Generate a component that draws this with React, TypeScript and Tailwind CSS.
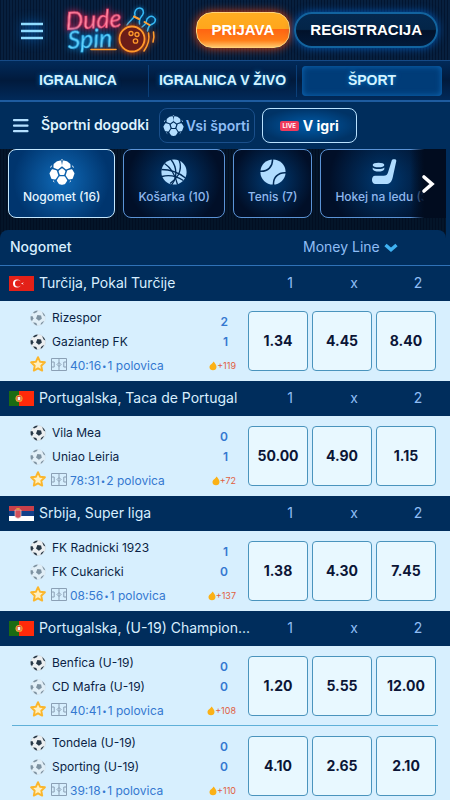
import { type ReactNode } from "react";

type Flag = "tr" | "pt" | "rs";

type Match = {
  home: string;
  away: string;
  score: [number, number];
  serving: "home" | "away";
  clock: string;
  half: string;
  more: number;
  odds: string[];
};

const leagues: { name: string; flag: Flag; matches: Match[] }[] = [
  {
    name: "Turčija, Pokal Turčije",
    flag: "tr",
    matches: [
      { home: "Rizespor", away: "Gaziantep FK", score: [2, 1], serving: "away", clock: "40:16", half: "1 polovica", more: 119, odds: ["1.34", "4.45", "8.40"] },
    ],
  },
  {
    name: "Portugalska, Taca de Portugal",
    flag: "pt",
    matches: [
      { home: "Vila Mea", away: "Uniao Leiria", score: [0, 1], serving: "home", clock: "78:31", half: "2 polovica", more: 72, odds: ["50.00", "4.90", "1.15"] },
    ],
  },
  {
    name: "Srbija, Super liga",
    flag: "rs",
    matches: [
      { home: "FK Radnicki 1923", away: "FK Cukaricki", score: [1, 0], serving: "home", clock: "08:56", half: "1 polovica", more: 137, odds: ["1.38", "4.30", "7.45"] },
    ],
  },
  {
    name: "Portugalska, (U-19) Champion...",
    flag: "pt",
    matches: [
      { home: "Benfica (U-19)", away: "CD Mafra (U-19)", score: [0, 0], serving: "home", clock: "40:41", half: "1 polovica", more: 108, odds: ["1.20", "5.55", "12.00"] },
      { home: "Tondela (U-19)", away: "Sporting (U-19)", score: [0, 0], serving: "home", clock: "39:18", half: "1 polovica", more: 110, odds: ["4.10", "2.65", "2.10"] },
    ],
  },
];

const sports = [
  { label: "Nogomet (16)", icon: <FootballIcon className="size-[26px]" />, active: true },
  { label: "Košarka (10)", icon: <BasketballIcon /> },
  { label: "Tenis (7)", icon: <TennisIcon /> },
  { label: "Hokej na ledu (3)", icon: <HockeyIcon /> },
];

function FootballIcon({ className }: { className: string }) {
  return (
    <svg viewBox="0 0 26 26" className={className} fill="currentColor" stroke="currentColor" strokeLinejoin="round" aria-hidden="true">
      <g strokeWidth="2">
        <path d="M13 10.4l2.400 1.800-.9 2.800h-3l-.9-2.800z" />
        <path d="M8.300 3.200l3.100-.6.700 4.200-3.400 2.600-3.300-1.400.2-2.500z" />
        <path d="M17.700 3.200l-3.100-.6-.7 4.200 3.400 2.600 3.300-1.400-.2-2.500z" />
        <path d="M3.400 11.300l3.600.9 1.300 4.100-2.200 3.200-3-.5-1.600-4.600z" />
        <path d="M22.600 11.300l-3.600.9-1.300 4.100 2.200 3.200 3-.5 1.600-4.600z" />
        <path d="M10.800 18.300h4.400l2 3.200-1.800 2.800-2.400.6-2.400-.6-1.800-2.800z" />
      </g>
      <path d="M1.600 8.600l1-2M24.400 8.600l-1-2M5.300 22.900l-1.300-1.200M20.700 22.900l1.300-1.200M12.200.9h1.600" strokeWidth="1" />
    </svg>
  );
}

function BasketballIcon() {
  return (
    <svg viewBox="0 0 26 26" className="size-[26px]" aria-hidden="true">
      <circle cx="13" cy="13" r="12.600" fill="currentColor" />
      <g fill="none" stroke="#012a57" strokeWidth="1.300">
        <path d="M3.500 4.500C9 8 14 15 16.500 25.500" />
        <path d="M10 .5c4 5 5.500 11 4.500 17-.5 3-2 6-4 8.500" />
        <path d="M18 .8c2 5 1.500 11-.8 15.200-2 3.500-4.700 6-8.200 8.500" />
        <path d="M.5 10.500c8 0 17 3 24 8.500" />
        <path d="M.8 17.500c6-1.500 14-1 21.500 4" />
      </g>
    </svg>
  );
}

function TennisIcon() {
  return (
    <svg viewBox="0 0 26 26" className="size-[26px]" aria-hidden="true">
      <circle cx="13" cy="13" r="12.600" fill="currentColor" />
      <path d="M12.500 0C13 7.500 8 12.800 0 12.300M13.500 26C13 18.500 18 13.200 26 13.700" fill="none" stroke="#012a57" strokeWidth="1.500" />
    </svg>
  );
}

function HockeyIcon() {
  return (
    <svg viewBox="0 0 28 28" className="size-[28px]" fill="currentColor" aria-hidden="true">
      <path d="M21.800 2.200c.5-1.200 4.800-1.200 4.500.7l-3.600 16.600c-1.200 4.900-3 6.500-7 6.500H5.500c-4.600 0-4.600-8.300-.4-8.300h8.600c2.500 0 3.500-1 4.300-3.200z" />
      <ellipse cx="8.500" cy="7" rx="5.800" ry="2.300" />
      <path d="M2.700 9.400c1.800 2.200 9.800 2.200 11.600 0v1.800c-1.200 3.200-10.400 3.200-11.600 0z" />
    </svg>
  );
}

function BallIcon({ faded }: { faded: boolean }) {
  return (
    <svg viewBox="0 0 16 16" className={`size-4 ${faded ? "opacity-50" : ""}`} aria-hidden="true">
      <circle cx="8" cy="8" r="7.500" fill="#eceff1" stroke="#c3ccd4" strokeWidth=".4" />
      <g fill="#263746">
        <path d="M7.400 4.900l3.700.6.700 3.300-2.900 2-2.900-2.300z" />
        <path d="M3 2.500C4.400 1.200 6 .6 7.600.5l-.5 1.600-3.100 1.500z" />
        <path d="M.5 6.400l1.900-.5 1 2.400-1.300 2.600L.8 10z" />
        <path d="M3.200 12.200l3.100.8 1 2.400c-1.700-.2-3.500-1.300-4.100-3.200z" />
        <path d="M11 12.900l3-2.100c-.4 1.800-1.900 3.400-3.400 4z" />
        <path d="M12 1.900c1.700 1.100 2.900 2.700 3.300 4.600l-1.700-1.100z" />
      </g>
    </svg>
  );
}

function PitchIcon() {
  return (
    <svg viewBox="0 0 16 13" className="h-[13px] w-4" fill="none" stroke="#8ba0b5" aria-hidden="true">
      <path d="M.5.5h15v12H.5zM8 .5v12" />
      <path d="M.5 4h2.700v5H.5M15.500 4h-2.700v5h2.700" />
      <path d="M8 4.500l2 2-2 2-2-2z" />
    </svg>
  );
}

function StarIcon() {
  return (
    <svg viewBox="0 0 16 16" className="size-4" fill="#fff0c0" stroke="#fbb62c" strokeWidth="1.900" strokeLinejoin="round" aria-hidden="true">
      <path d="M8 1.200l2 4.500 4.900.6-3.600 3.400.9 4.900L8 12.300l-4.200 2.300.9-4.900L1.100 6.300l4.900-.6z" />
    </svg>
  );
}

function FlameIcon() {
  return (
    <svg viewBox="0 0 8 10" className="h-[10px] w-2" aria-hidden="true">
      <path d="M4.500.4C6.100 2 7.500 4 7.500 6 7.500 8 6 9.300 4 9.300S.5 8 .5 6.200c0-1.300.7-2.200 1.700-3C3.200 2.500 4 1.500 4.500.4z" fill="#fbb116" />
    </svg>
  );
}

function FlagIcon({ flag }: { flag: Flag }) {
  if (flag === "tr") {
    return (
      <svg viewBox="0 0 25 15" className="h-[15px] w-[25px] shrink-0" aria-hidden="true">
        <path d="M0 0h25v15H0z" fill="#e32118" />
        <circle cx="8" cy="7.500" r="4" fill="#fff" />
        <circle cx="9.200" cy="7.500" r="3.200" fill="#e32118" />
        <path d="M12 7.500l3-1.200-1.400 1.200L15 8.700z" fill="#fff" />
      </svg>
    );
  }
  if (flag === "pt") {
    return (
      <svg viewBox="0 0 25 15" className="h-[15px] w-[25px] shrink-0" aria-hidden="true">
        <path d="M0 0h25v15H0z" fill="#ff2a0a" />
        <path d="M0 0h10v15H0z" fill="#1c6b12" />
        <circle cx="10" cy="7.500" r="3.500" fill="#e8b53a" />
        <path d="M8.200 5.500h3.600v2.800c0 2-3.600 2-3.600 0z" fill="#f4f4f4" stroke="#d8281a" strokeWidth=".8" />
      </svg>
    );
  }
  return (
    <svg viewBox="0 0 25 15" className="h-[15px] w-[25px] shrink-0" aria-hidden="true">
      <path d="M0 0h25v5H0z" fill="#c8404a" />
      <path d="M0 5h25v5H0z" fill="#12408a" />
      <path d="M0 10h25v5H0z" fill="#fff" />
      <path d="M6 4h6v5.500c0 3.500-6 3.500-6 0z" fill="#d4505a" stroke="#e9c9c0" strokeWidth=".7" />
      <path d="M7.500 3.500V1.800l1.500.8 1.500-.8v1.700z" fill="#e8b53a" />
    </svg>
  );
}

function Logo() {
  return (
    <svg viewBox="0 0 100 54" className="h-[54px] w-[100px] overflow-visible" aria-label="Dude Spin" role="img">
      <g fontFamily="Lato, sans-serif" fontStyle="italic">
        <text x="4" y="27" fontSize="25" transform="rotate(-3 4 27)" fill="#ff8fa8" stroke="#f02c5c" strokeWidth=".5" className="drop-shadow-[0_0_3px_#ff1d54]">Dude</text>
        <text x="6" y="46" fontSize="25" transform="rotate(-3 6 46)" fill="#6ad8ff" stroke="#18a3ea" strokeWidth=".5" className="drop-shadow-[0_0_3px_#0a8de0]">Spin</text>
      </g>
      <g fill="none" strokeLinecap="round">
        <g stroke="#35b9f5" strokeWidth="1.500" className="drop-shadow-[0_0_2px_#0a8de0]">
          <path d="M65 22c2-4 6-5 8-10-1-3 1-7 4.500-7s5 4 3 7c-2 2.500-4 4-3 9" />
          <path d="M80 24c3-2 4-3 4.500-6 0-3 4-6 7-4s2 6-1 7c-3 1-4 2-5 7" />
        </g>
        <path d="M72 13.500l5 2.500M82.500 19l5 3" stroke="#ffa033" strokeWidth="2" />
        <g stroke="#ff9a2b" className="drop-shadow-[0_0_3px_#ff4b00]">
          <circle cx="70" cy="36" r="12.500" fill="#6b1d18" strokeWidth="1.800" />
          <circle cx="69" cy="30.500" r="2" strokeWidth="1.300" />
          <circle cx="75" cy="31.500" r="2" strokeWidth="1.300" />
          <circle cx="73.500" cy="38" r="2.200" strokeWidth="1.300" />
          <path d="M86.500 30c1.500 7-1 13-4.500 18M91.500 29c.8 4 .5 7-.5 10M29 46.500h25" strokeWidth="1.600" />
        </g>
      </g>
    </svg>
  );
}

function Header() {
  return (
    <header className="bg-[#051b3b] bg-[repeating-linear-gradient(90deg,#03152f_0_1px,#07203f_1px_3px)]">
      <div className="flex h-15 items-center pr-3 pl-[18px]">
        <button aria-label="Meni" className="text-[#8fdcff] drop-shadow-[0_0_6px_#0074e0]">
          <svg viewBox="0 0 28 28" className="size-7" fill="none" stroke="currentColor" strokeWidth="2.600">
            <path d="M3 8h22M3 15h22M3 22h22" />
          </svg>
        </button>
        <a href="#home" className="ml-4">
          <Logo />
        </a>
        <div className="ml-auto flex gap-1 font-['Liberation_Sans',sans-serif] text-[15px] font-bold text-white [text-shadow:0_1px_2px_#00000090]">
          <button className="h-9 rounded-[16px] border border-[#ffd27a] bg-[linear-gradient(#ffae22_0%,#ffa61c_46%,#ff6412_48%,#ff7d16_80%,#ffc46a_100%)] px-[15px] shadow-[0_0_10px_#e8400a]">
            PRIJAVA
          </button>
          <button className="h-9 rounded-[18px] border-2 border-[#12639f] bg-[linear-gradient(#04284f_0%,#032548_48%,#01112a_52%,#021a3a_100%)] px-[14px] shadow-[0_0_8px_#0057b8]">
            REGISTRACIJA
          </button>
        </div>
      </div>
      <nav className="flex h-[42px] items-center border-t border-b-2 border-t-[#164a86] border-b-[#1e5ca0] bg-[linear-gradient(#012a5a,#011a3c_50%,#012a5a)] px-2 font-['Liberation_Sans',sans-serif] text-[14px] font-bold text-[#d3f3ff] [text-shadow:0_0_5px_#0a7ed0]">
        <a href="#casino" className="flex h-8 flex-1 items-center justify-center border-r border-[#0b3f78]">IGRALNICA</a>
        <a href="#live-casino" className="flex h-8 items-center border-r border-[#0b3f78] px-[10px]">IGRALNICA V ŽIVO</a>
        <a href="#sport" className="ml-[5px] flex h-[30px] flex-1 items-center justify-center rounded bg-[#003c78] shadow-[inset_0_0_6px_#0e6ab8]">ŠPORT</a>
      </nav>
    </header>
  );
}

function Toolbar() {
  return (
    <div className="flex h-[47px] items-center bg-[#002d5c] pl-3">
      <button aria-label="Športni meni" className="text-[#b4e0ff]">
        <svg viewBox="0 0 18 18" className="size-[18px]" fill="none" stroke="currentColor" strokeWidth="2.200" strokeLinecap="round">
          <path d="M2 3.200h13.500M2 8.700h13.500M2 14.200h13.500" />
        </svg>
      </button>
      <h1 className="ml-[11px] pb-0.5 text-[14px] font-semibold text-[#dff3ff]">Športni dogodki</h1>
      <button className="ml-[10px] flex h-[35px] items-center gap-0.5 rounded-lg border border-[#1a4f8b] pr-1 pl-[3px] text-[14px] font-semibold text-[#8fbdf5]">
        <FootballIcon className="size-[21px] text-[#b4deff]" />
        Vsi športi
      </button>
      <button className="ml-[7px] flex h-[35px] items-center gap-1 rounded-lg border border-[#b9e2ff] bg-[radial-gradient(#005ba8,#003366_75%)] px-[17px] text-[14px] font-bold text-white">
        <span className="rounded-xs bg-[#ee3a5c] px-[3px] text-[6px] leading-[10px]">LIVE</span>
        V igri
      </button>
    </div>
  );
}

function SportCard({ label, icon, active }: { label: string; icon: ReactNode; active?: boolean }) {
  return (
    <button
      className={`flex h-[69px] shrink-0 flex-col items-center rounded-lg border px-[14px] pt-2 text-[12px] font-medium ${
        active
          ? "border-[#c4e8ff] bg-[radial-gradient(circle_at_50%_45%,#0f6ab8,#00356e_75%)] text-[#e6f6ff]"
          : "border-[#5b93d6] bg-[radial-gradient(circle_at_50%_45%,#003a73,#010f28_75%)] text-[#8fb8ee]"
      }`}
    >
      <span className={`flex h-7 items-center ${active ? "text-white" : "text-[#b0dcff]"}`}>{icon}</span>
      <span className="mt-[3px] leading-4 whitespace-nowrap">{label}</span>
    </button>
  );
}

function MatchRow({ match, divided }: { match: Match; divided: boolean }) {
  const { home, away, score, serving, clock, half, more, odds } = match;
  return (
    <li className={`mx-3 flex h-20 ${divided ? "border-b border-[#5fb0d8]" : ""}`}>
      <div className="flex-1 pt-[5px] pl-[18px] text-[12px] text-[#0b1f45]">
        <p className="flex h-6 items-center gap-1.5">
          <BallIcon faded={serving !== "home"} />
          {home}
        </p>
        <p className="flex h-6 items-center gap-1.5">
          <BallIcon faded={serving !== "away"} />
          {away}
        </p>
        <p className="flex h-6 items-center text-[#3478d0]">
          <button aria-label="Priljubljeno" className="mb-1">
            <StarIcon />
          </button>
          <span className="mr-[3px] mb-1 ml-[5px]">
            <PitchIcon />
          </span>
          {clock}
          <span className="mx-px text-[8px]">•</span>
          {half}
        </p>
      </div>
      <div className="flex flex-col items-end pt-[11px] text-[12px] font-semibold text-[#3478d0]">
        <span className="mr-2 h-5 leading-5">{score[0]}</span>
        <span className="mr-2 h-5 leading-5">{score[1]}</span>
        <a href="#markets" className="mt-1 flex h-5 items-center text-[9px] font-normal text-[#e0603f]">
          <FlameIcon />+{more}
        </a>
      </div>
      <div className="mt-[10px] mr-0.5 ml-3 grid h-15 w-[188px] grid-cols-3 gap-1">
        {odds.map((odd, i) => (
          <button key={i} className="rounded border border-[#4a94bd] bg-[#e8f8ff] pb-0.5 text-[14px] font-bold text-[#0b1536]">
            {odd}
          </button>
        ))}
      </div>
    </li>
  );
}

export default function App() {
  return (
    <div className="min-h-screen bg-[#002d5c] font-[Inter,sans-serif]">
      <Header />
      <Toolbar />
      <main>
        <div className="mr-1 bg-[#03132a] bg-[repeating-linear-gradient(90deg,#020f22_0_1px,#041529_1px_3px)]">
          <div className="relative flex gap-2 overflow-hidden pb-3 pl-2">
            {sports.map((s) => (
              <SportCard key={s.label} {...s} />
            ))}
            <button
              aria-label="Naprej"
              className="absolute top-0 right-0 flex h-[69px] w-9 items-center justify-end bg-[linear-gradient(90deg,transparent,#010c1f_40%)] pr-[11px] text-white"
            >
              <svg viewBox="0 0 14 20" className="h-5 w-3.5" fill="none" stroke="currentColor" strokeWidth="3.600" strokeLinecap="round">
                <path d="M3 3l8 7-8 7" />
              </svg>
            </button>
          </div>
          <div className="flex h-[35px] items-center rounded-t-lg bg-[#002d5c] pr-12 pb-0.5 pl-[10px]">
            <h2 className="text-[14px] font-medium text-[#d8efff]">Nogomet</h2>
            <div className="relative ml-auto flex items-center">
              <select
                aria-label="Vrsta stave"
                className="h-7 appearance-none bg-transparent pr-[18px] text-[14px] text-[#8fbdf5] outline-none"
              >
                <option>Money Line</option>
              </select>
              <svg viewBox="0 0 14 14" className="pointer-events-none absolute right-0 size-3.5" fill="none" stroke="#3fb2f2" strokeWidth="3.400" aria-hidden="true">
                <path d="M1.500 5L7 9.800 12.500 5" />
              </svg>
            </div>
          </div>
        </div>
        {leagues.map((league) => (
          <section key={league.name} className="first-of-type:border-t first-of-type:border-[#2f72b8]">
            <div className="flex h-[35px] items-center bg-[#002d5c] pl-[9px]">
              <FlagIcon flag={league.flag} />
              <h3 className="ml-[5px] flex-1 truncate pb-0.5 text-[14px] text-[#d8efff]">{league.name}</h3>
              <div className="grid w-48 shrink-0 grid-cols-3 pb-0.5 text-center text-[14px] text-[#8fbdf5]">
                <span>1</span>
                <span>x</span>
                <span>2</span>
              </div>
            </div>
            <ul className="bg-[#d7effe]">
              {league.matches.map((m, i) => (
                <MatchRow key={m.home} match={m} divided={i < league.matches.length - 1} />
              ))}
            </ul>
          </section>
        ))}
      </main>
    </div>
  );
}
